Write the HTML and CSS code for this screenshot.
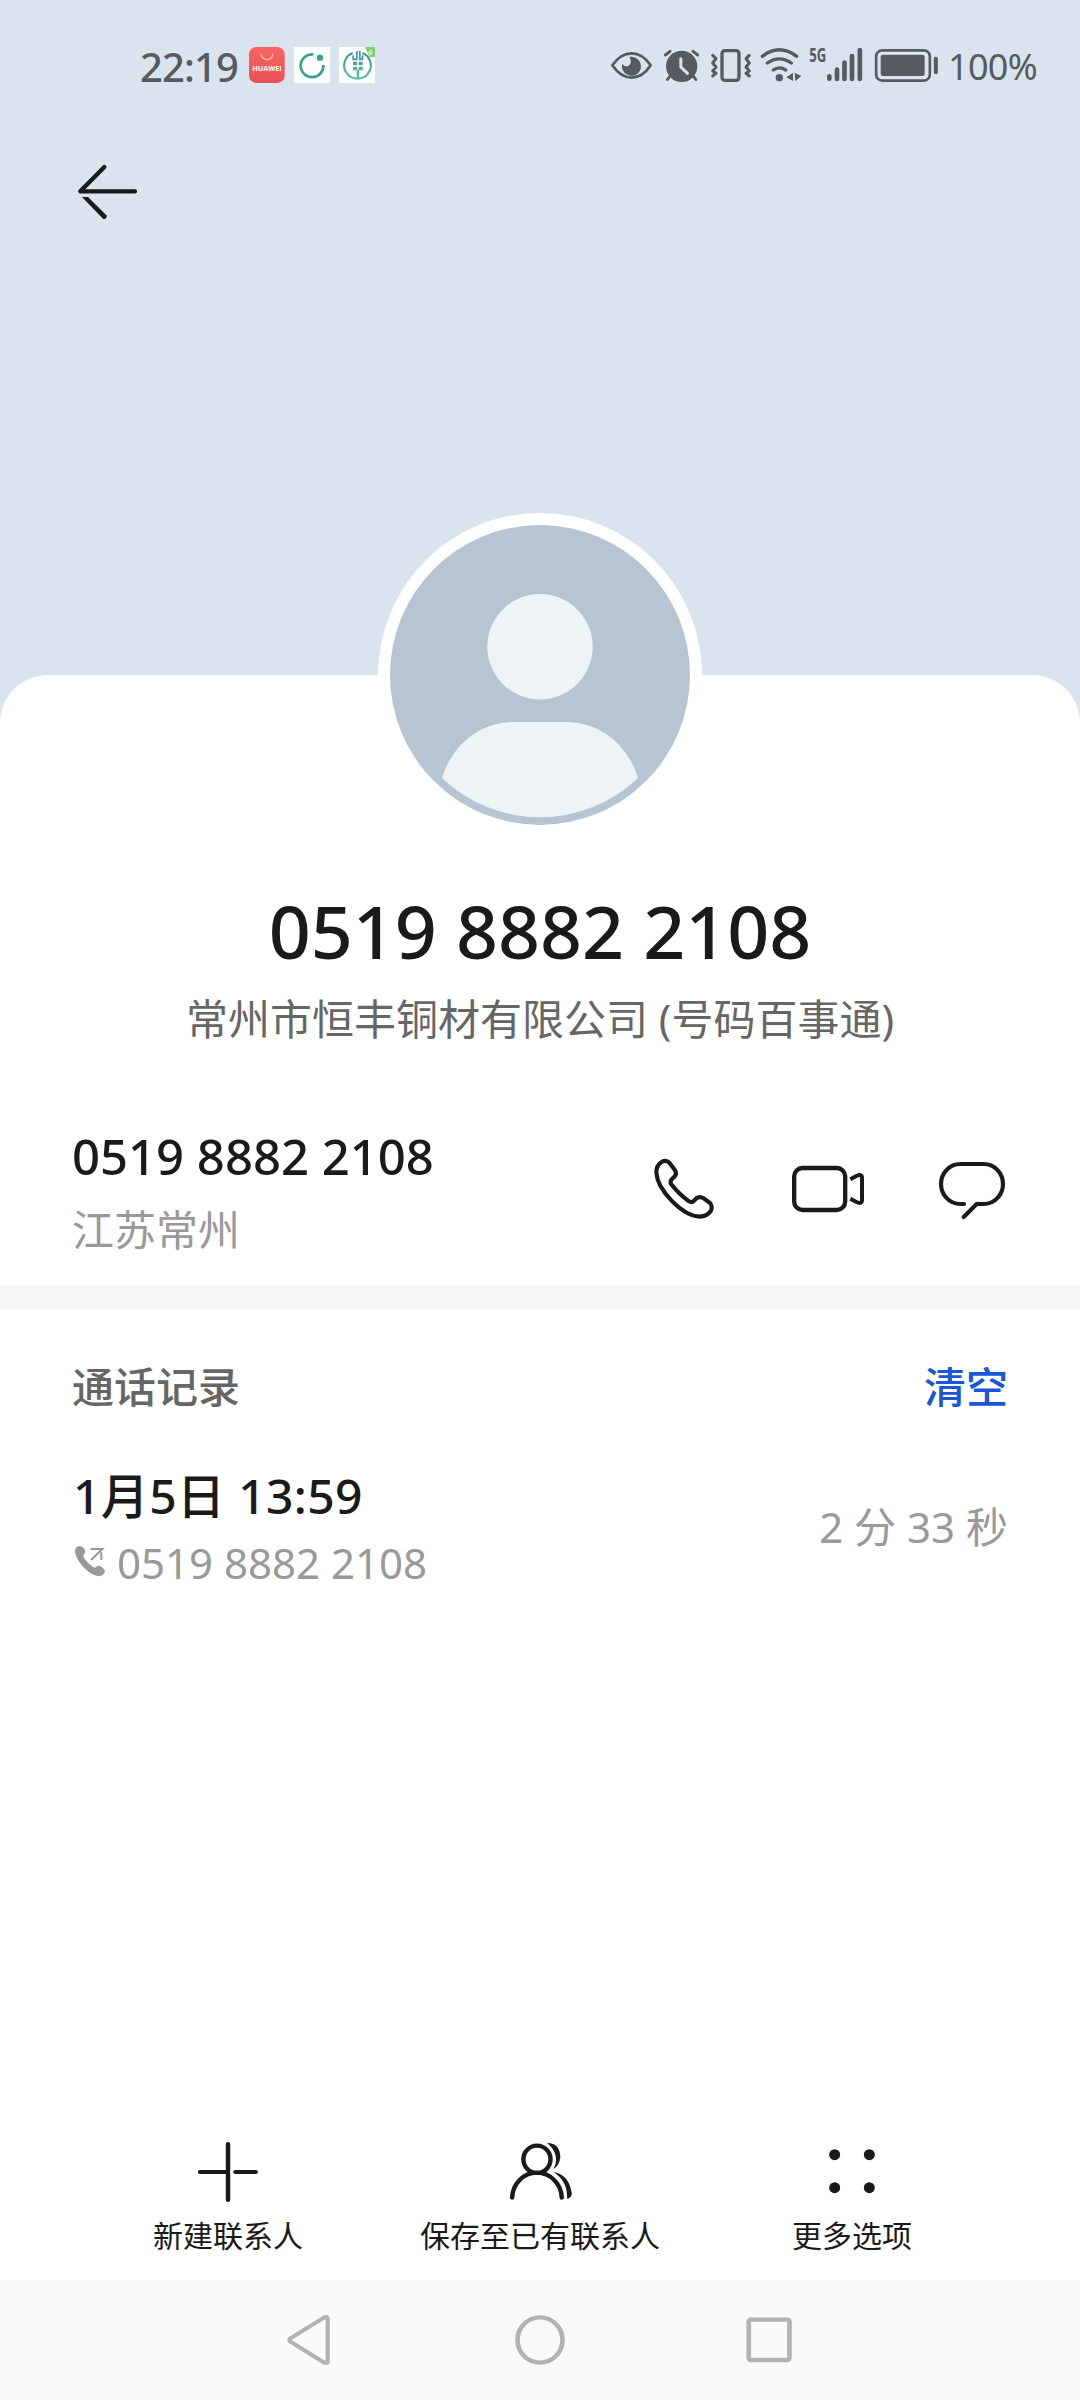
FILE: index.html
```html
<!DOCTYPE html>
<html lang="zh-CN">
<head>
<meta charset="utf-8">
<title>联系人</title>
<link rel="stylesheet" href="styles.css">
</head>
<body>
<div class="screen">
  <header class="header">
    <div class="status">
      <span class="time">22:19</span>
      <svg class="app" viewBox="0 0 108 108">
        <defs><linearGradient id="hw" x1="0" y1="0" x2="0" y2="1"><stop offset="0" stop-color="#f8665f"/><stop offset="1" stop-color="#ea4f58"/></linearGradient></defs>
        <rect width="107" height="108" rx="22" fill="url(#hw)"/>
        <path d="M37 22a17 16 0 0 0 34 0" fill="none" stroke="#fbc0b6" stroke-width="4" stroke-linecap="round"/>
        <text class="brand" x="10" y="71" textLength="88" lengthAdjust="spacingAndGlyphs">HUAWEI</text>
      </svg>
      <svg class="app" viewBox="0 0 108 108">
        <rect width="108" height="108" fill="#fff"/>
        <path d="M58 22.500A34 34 0 1 0 88 54" fill="none" stroke="#35a287" stroke-width="8"/>
        <circle cx="78" cy="32" r="9.500" fill="#35a287"/>
      </svg>
      <svg class="app" viewBox="0 0 108 108">
        <defs><linearGradient id="wh" gradientUnits="userSpaceOnUse" x1="0" y1="10" x2="0" y2="98"><stop offset="0" stop-color="#3e93a0"/><stop offset="1" stop-color="#5cbf9f"/></linearGradient></defs>
        <rect width="108" height="108" fill="#fff"/>
        <path d="M78 0h30v30H92z" fill="#7fd068"/>
        <path d="M88 17l12-8M91 23l10-7" stroke="#e6f7dc" stroke-width="4"/>
        <path d="M41 18A40 40 0 1 0 70 18" fill="none" stroke="url(#wh)" stroke-width="6.500"/>
        <path d="M51 12h5v28h-16V25h5v9h6zM60 12h5v22h3v-9h5v15H60zM42 44h12v11H42zM59 44h12v11H59zM42 59h12v11H42zM59 59h12v11H59zM53 68h7v28h-7z" fill="url(#wh)"/>
      </svg>
      <div class="indicators">
        <svg class="i-eye" viewBox="30 48 129 114">
          <path d="M37 106Q62 70 95 70T152 106Q128 143 95 143T37 106z" fill="none" stroke="#575b60" stroke-width="8" stroke-linejoin="round"/>
          <path d="M88 81a28.500 28.500 0 1 1-21 20q8 12 19 6 12-9 2-26z" fill="#575b60"/>
        </svg>
        <svg class="i-alarm" viewBox="189 48 111 114">
          <circle cx="245" cy="109" r="47" fill="#575b60"/>
          <path d="M196 75l14-11M293 75l-14-11" stroke="#575b60" stroke-width="9" stroke-linecap="round"/>
          <path d="M209 140l-7 9M281 140l7 9" stroke="#575b60" stroke-width="8" stroke-linecap="round"/>
          <path d="M242.500 86v25l20 19" fill="none" stroke="#dae4ee" stroke-width="9" stroke-linecap="round" stroke-linejoin="round"/>
        </svg>
        <svg class="i-vib" viewBox="330 48 126 114">
          <g fill="none" stroke="#575b60" stroke-linecap="round" stroke-linejoin="round">
            <rect x="366" y="62" width="51" height="89" rx="9" stroke-width="10"/>
            <path d="M338 76l10 10-10 13 10 12-10 12 10 7-10 8M448 76l-10 10 10 13-10 12 10 12-10 7 10 8" stroke-width="9"/>
          </g>
        </svg>
        <svg class="i-wifi" viewBox="480 48 126 114">
          <g fill="none" stroke="#575b60" stroke-width="10" stroke-linecap="round">
            <path d="M487 79Q538 40 590 79M502 99Q538 74 574 99M520 120Q538 107 557 120"/>
          </g>
          <circle cx="538" cy="143" r="11" fill="#575b60"/>
          <path d="M579 128v25l-20-11zM584 128l20 10-18 16z" fill="#575b60"/>
        </svg>
        <svg class="i-signal" viewBox="627 48 162 114">
          <text class="net" x="628" y="97" textLength="51" lengthAdjust="spacingAndGlyphs">5G</text>
          <path d="M688 139v7M711 119v28M733.500 98v49M756 78v69M779.500 60v87" stroke="#575b60" stroke-width="14" stroke-linecap="round"/>
        </svg>
        <svg class="i-bat" viewBox="822 48 195 114">
          <rect x="828.500" y="61" width="161" height="91" rx="18" fill="none" stroke="#575b60" stroke-width="8"/>
          <rect x="842" y="74" width="132" height="64" rx="7" fill="#575b60"/>
          <path d="M1007.500 86v41" stroke="#575b60" stroke-width="12" stroke-linecap="round"/>
        </svg>
        <span class="percent">100%</span>
      </div>
    </div>
    <svg class="back" viewBox="66 48 216 216">
      <path d="M163 81L91 154H255" fill="none" stroke="#1a1a1a" stroke-width="13" stroke-linecap="round" stroke-linejoin="round"/>
      <path d="M96 171h18l55 55q3 5-1 9t-9 1z" fill="#1a1a1a"/>
    </svg>
  </header>
  <main class="sheet">
    <svg class="avatar" viewBox="378 513 324 324">
      <circle cx="540" cy="675" r="162" fill="#fff"/>
      <circle cx="540" cy="675" r="150" fill="#b7c4d1"/>
      <circle cx="540" cy="646.700" r="52.700" fill="#eef3f6"/>
      <path d="M514 722h52c34 0 62 23 72 56a142 142 0 0 1-196 0c10-33 38-56 72-56z" fill="#eef3f6"/>
    </svg>
    <h1 class="title">0519 8882 2108</h1>
    <p class="subtitle">常州市恒丰铜材有限公司 (号码百事通)</p>
    <section class="contact">
      <div>
        <div class="number">0519 8882 2108</div>
        <div class="place">江苏常州</div>
      </div>
      <div class="actions">
        <svg class="ico" viewBox="54 72 216 216">
          <path d="M117 97Q105 88 93 97 79 107 79 127C82 181 158 259 210 260Q231 259 242 244 249 230 240 219L221 205Q208 197 198 206L191 213Q185 219 177 214 147 193 124 163 118 155 126 147L133 140Q142 131 134 119z" fill="none" stroke="#1a1a1a" stroke-width="12.500" stroke-linejoin="round"/>
        </svg>
        <svg class="ico" viewBox="486 72 216 216">
          <rect x="492.500" y="114" width="153" height="126" rx="25" fill="none" stroke="#1a1a1a" stroke-width="13"/>
          <path d="M661 148l18-10q16-7 17 4v70q-1 11-17 4l-18-10" fill="none" stroke="#1a1a1a" stroke-width="12"/>
        </svg>
        <svg class="ico" viewBox="918 72 216 216">
          <path d="M1002 222H991A58 60 0 0 1 991 102H1061A58 60 0 0 1 1061 222H1040L1001 261" fill="none" stroke="#1a1a1a" stroke-width="12.500" stroke-linecap="round" stroke-linejoin="miter"/>
        </svg>
      </div>
    </section>
    <section class="log">
      <div class="log-head"><span>通话记录</span><span class="clear">清空</span></div>
      <div class="entry">
        <div>
          <div class="date">1月5日 13:59</div>
          <div class="call">
            <svg class="out" viewBox="66 612 108 108">
              <path d="M88 615q10 0 17 12 3 8-3 13-4 5 0 11 12 17 27 27 6 4 10-1 6-6 15 0 10 6 11 14-3 13-19 15-24-3-49-31-20-24-22-44 0-14 13-16z" fill="#999"/>
              <path d="M122 624h35l-34 33M154 634v23" fill="none" stroke="#999" stroke-width="6"/>
            </svg>
            <span>0519 8882 2108</span>
          </div>
        </div>
        <div class="duration">2 分 33 秒</div>
      </div>
    </section>
  </main>
  <nav class="tools">
    <div class="tool">
      <svg class="ico" viewBox="173.600 48 201.600 216" preserveAspectRatio="none">
        <path d="M274.500 72V240M196 156H269M295 156H352" stroke="#1a1a1a" stroke-width="12.500" stroke-linecap="round"/>
        <path d="M281.500 148h7v16h-7z" fill="#fff"/>
      </svg>
      <span>新建联系人</span>
    </div>
    <div class="tool">
      <svg class="ico" viewBox="1047.200 48 201.600 216" preserveAspectRatio="none">
        <g fill="none" stroke="#1a1a1a" stroke-width="12.500" stroke-linecap="round">
          <ellipse cx="1139.500" cy="118" rx="38" ry="41"/>
          <path d="M1070 233C1071 192 1101 158 1139 158S1208 192 1209 233"/>
        </g>
        <path d="M1168 69Q1203 68 1205 111 1203 135 1186 147 1206 104 1168 69zM1186 156Q1231 166 1237 221 1235 234 1224 236 1226 184 1186 156z" fill="#1a1a1a"/>
      </svg>
      <span>保存至已有联系人</span>
    </div>
    <div class="tool">
      <svg class="ico" viewBox="228 48 216 216">
        <g fill="#1a1a1a"><circle cx="284" cy="104" r="16.500"/><circle cx="388" cy="104" r="16.500"/><circle cx="284" cy="203" r="16.500"/><circle cx="388" cy="203" r="16.500"/></g>
      </svg>
      <span>更多选项</span>
    </div>
  </nav>
  <footer class="navbar">
    <svg class="key" viewBox="56 150 168 180" preserveAspectRatio="none"><path d="M180 172L84 236Q81 240 84 244L180 308Q189 312 189.500 304V176Q189 168 180 172z" fill="none" stroke="#b2b2b2" stroke-width="12"/></svg>
    <svg class="key" viewBox="700 150 168 180" preserveAspectRatio="none"><ellipse cx="784" cy="240" rx="63" ry="68" fill="none" stroke="#b2b2b2" stroke-width="13"/></svg>
    <svg class="key" viewBox="1344 150 168 180" preserveAspectRatio="none"><rect x="1368.500" y="179" width="114" height="121" rx="6" fill="none" stroke="#b2b2b2" stroke-width="13"/></svg>
  </footer>
</div>
</body>
</html>
```
FILE: styles.css
```css
body {
  margin: 0;
  font-family: "Noto Sans", "Noto Sans CJK SC", sans-serif;
  color: #1a1a1a;
}
svg { display: block; flex: none; }
.screen {
  display: flex;
  flex-direction: column;
  width: 1080px;
  height: 2400px;
  overflow: hidden;
  background: #dae4ee;
}
.header { height: 675px; flex: none; }
.status {
  display: flex;
  align-items: center;
  height: 130px;
  padding-left: 140px;
  box-sizing: border-box;
  color: #575b60;
  white-space: nowrap;
}
.time { width: 109px; padding-top: 3px; font-size: 40px; line-height: 56px; letter-spacing: -0.9px; font-weight: 500; }
.app { width: 36px; height: 36px; margin-right: 9px; }
.brand { font: bold 19px "Open Sans", sans-serif; fill: #fff; }
.indicators { display: flex; align-items: center; margin-left: 226px; }
.indicators svg { height: 38px; }
.i-eye { width: 43px; margin-right: 10px; }
.i-alarm { width: 37px; margin-right: 10px; }
.i-vib { width: 42px; margin-right: 8px; }
.i-wifi { width: 42px; margin-right: 7px; }
.i-signal { width: 54px; margin-right: 11px; overflow: visible; }
.i-bat { width: 65px; margin-right: 9px; }
.net { font: bold 56px "Open Sans", sans-serif; fill: #575b60; }
.percent { padding-top: 4px; font-size: 36px; line-height: 50px; letter-spacing: -0.7px; }
.back { width: 72px; height: 72px; margin: 26px 0 0 72px; }

.sheet {
  flex: 1;
  display: flex;
  flex-direction: column;
  background: #fff;
  border-radius: 48px 48px 0 0;
}
.avatar { width: 324px; height: 324px; margin: -162px auto 0; }
.title { margin: 44px 0 0; font-size: 73.500px; line-height: 100px; font-weight: 500; text-align: center; }
.subtitle { margin: 8px 0 0; font-size: 42px; line-height: 60px; color: #666; text-align: center; }
.contact {
  display: flex;
  justify-content: space-between;
  align-items: center;
  padding: 73px 72px 25px;
  border-bottom: 24px solid #f6f6f6;
}
.number { font-size: 49px; line-height: 68px; font-weight: 500; }
.place { margin-top: 10px; font-size: 42px; line-height: 60px; color: #999; }
.actions { display: flex; gap: 72px; margin-top: -3px; }
.ico { width: 72px; height: 72px; }
.log { padding: 48px 72px 0; }
.log-head { display: flex; justify-content: space-between; font-size: 42px; line-height: 60px; font-weight: 500; color: #666; }
.clear { color: #1a57d8; }
.entry { display: flex; justify-content: space-between; align-items: center; margin-top: 46px; }
.date { padding-left: 1px; font-size: 48px; line-height: 66px; font-weight: 500; letter-spacing: 0.35px; }
.call { display: flex; align-items: center; gap: 9px; margin-top: 4px; font-size: 42px; line-height: 60px; color: #999; }
.out { width: 36px; height: 36px; }
.duration { margin-top: -2px; font-size: 42px; line-height: 60px; color: #999; }

.tools { display: grid; grid-template-columns: repeat(3, 312px); justify-content: center; height: 144px; background: #fff; }
.tool { display: flex; flex-direction: column; align-items: center; gap: 8px; font-size: 30px; line-height: 40px; white-space: nowrap; }
.navbar { display: flex; justify-content: center; align-items: center; gap: 170px; height: 120px; flex: none; background: #fafafa; }
.key { width: 60px; height: 60px; }
```
